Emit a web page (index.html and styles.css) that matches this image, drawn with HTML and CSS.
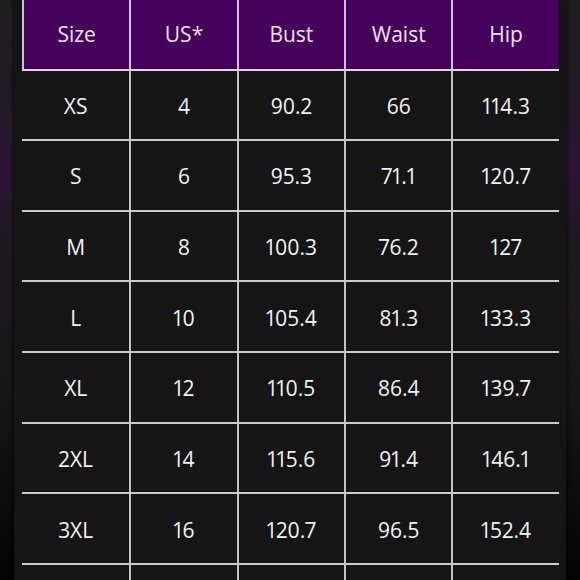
FILE: index.html
```html
<!DOCTYPE html>
<html lang="en">
<head>
<meta charset="utf-8">
<title>Size chart</title>
<link rel="stylesheet" href="styles.css">
</head>
<body>
<div class="page">
  <div class="card">
    <div class="chart">
      <div class="cell head first">Size</div>
      <div class="cell head">US*</div>
      <div class="cell head">Bust</div>
      <div class="cell head">Waist</div>
      <div class="cell head">Hip</div>

      <div class="cell first">XS</div><div class="cell">4</div><div class="cell">90.2</div><div class="cell">66</div><div class="cell">114.3</div>
      <div class="cell first">S</div><div class="cell">6</div><div class="cell">95.3</div><div class="cell">71.1</div><div class="cell">120.7</div>
      <div class="cell first">M</div><div class="cell">8</div><div class="cell">100.3</div><div class="cell">76.2</div><div class="cell">127</div>
      <div class="cell first">L</div><div class="cell">10</div><div class="cell">105.4</div><div class="cell">81.3</div><div class="cell">133.3</div>
      <div class="cell first">XL</div><div class="cell">12</div><div class="cell">110.5</div><div class="cell">86.4</div><div class="cell">139.7</div>
      <div class="cell first">2XL</div><div class="cell">14</div><div class="cell">115.6</div><div class="cell">91.4</div><div class="cell">146.1</div>
      <div class="cell first">3XL</div><div class="cell">16</div><div class="cell">120.7</div><div class="cell">96.5</div><div class="cell">152.4</div>
      <div class="cell first"></div><div class="cell"></div><div class="cell"></div><div class="cell"></div><div class="cell"></div>
    </div>
  </div>
</div>
</body>
</html>
```

FILE: styles.css
```css
html, body {
  margin: 0;
  padding: 0;
  width: 580px;
  height: 580px;
  overflow: hidden;
  background: #0a0a0a;
}

.page {
  width: 580px;
  height: 580px;
  display: flex;
  justify-content: center;
  background:
    linear-gradient(to bottom, #1e1e1e 0px, #221a26 110px, #2d1436 170px, #1d1a1e 240px, #161616 400px, #0c0c0c 500px, #030303 580px);
  font-family: "Open Sans", "Noto Sans", sans-serif;
}

.card {
  width: 552px;
  height: 580px;
  background: #151515;
  padding-left: 8px;
  box-sizing: border-box;
  overflow: hidden;
  box-shadow: -2px 0 3px rgba(0,0,0,0.4), 2px 0 3px rgba(0,0,0,0.4);
}

.chart {
  display: grid;
  grid-template-columns: repeat(5, 107.35px);
  grid-template-rows: 70.5px repeat(8, 70.66px);
  width: 537px;
}

.cell {
  display: flex;
  align-items: center;
  justify-content: center;
  box-sizing: border-box;
  color: #f2f2f2;
  font-size: 21px;
  border-left: 2px solid #c4c4c4;
  border-bottom: 2px solid #cbcbcb;
  padding-top: 2px;
  font-variant-numeric: proportional-nums;
}

.cell.first {
  border-left: none;
}

.cell.head {
  background: #46025a;
  color: #ece2f2;
  border-left: 2px solid #d2bede;
  border-bottom: 2px solid #e0d6e6;
  padding-top: 0;
}

.cell.head.first {
  border-left: 2px solid #d2bede;
}
```
